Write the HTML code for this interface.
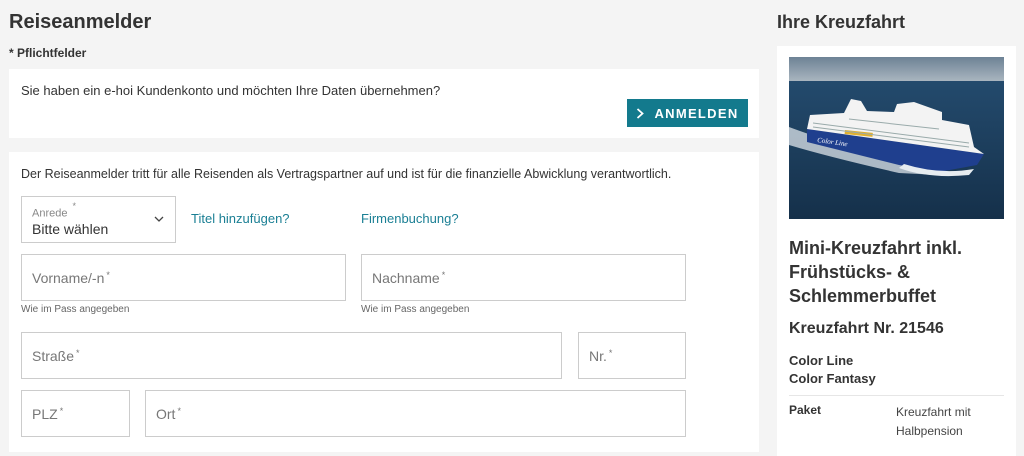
<!DOCTYPE html>
<html><head><meta charset="utf-8"><style>
*{box-sizing:border-box;margin:0;padding:0}
body{width:1024px;height:446px;overflow:hidden;background:#f4f4f4;font-family:"Liberation Sans",Arial,sans-serif;color:#333;position:relative}
.a{position:absolute}
.panel{position:absolute;background:#fff}
.f{position:absolute;border:1px solid #ccc;background:#fff;font-size:14px;color:#777;padding-left:10px;display:flex;align-items:center}
.f sup{font-size:9px;margin-left:2px;position:relative;top:-3px}
.hint{position:absolute;font-size:10px;color:#666}
a{color:#1a7f94;text-decoration:none;font-size:13px}
</style></head><body>
<div class="a" style="left:9px;top:11px;font-size:20px;font-weight:bold;color:#333">Reiseanmelder</div>
<div class="a" style="left:9px;top:46px;font-size:12px;font-weight:bold">* Pflichtfelder</div>
<div class="panel" style="left:9px;top:69px;width:750px;height:69px"></div>
<div class="a" style="left:21px;top:83px;font-size:13px">Sie haben ein e-hoi Kundenkonto und möchten Ihre Daten übernehmen?</div>
<div class="a" style="left:627px;top:99px;width:121px;height:28px;background:#137a8d;color:#fff;font-size:13px;font-weight:bold;letter-spacing:1.3px;display:flex;align-items:center;justify-content:center"><svg width="8" height="11" style="margin-right:10px"><path d="M1.5 1l5 4.5-5 4.5" fill="none" stroke="#fff" stroke-width="1.8"/></svg>ANMELDEN</div>
<div class="panel" style="left:9px;top:152px;width:750px;height:300px"></div>
<div class="a" style="left:21px;top:167px;font-size:12.5px">Der Reiseanmelder tritt für alle Reisenden als Vertragspartner auf und ist für die finanzielle Abwicklung verantwortlich.</div>
<div class="f" style="left:21px;top:196px;width:155px;height:47px;display:block;padding-top:7px">
<div style="font-size:11px;color:#888">Anrede <sup>*</sup></div>
<div style="font-size:14px;color:#333;margin-top:1px">Bitte wählen</div>
<svg class="a" style="left:132px;top:19px" width="10" height="7"><path d="M1 1l4 4 4-4" fill="none" stroke="#444" stroke-width="1.3"/></svg>
</div>
<a class="a" style="left:191px;top:211px">Titel hinzufügen?</a>
<a class="a" style="left:361px;top:211px">Firmenbuchung?</a>
<div class="f" style="left:21px;top:254px;width:325px;height:47px">Vorname/-n<sup>*</sup></div>
<div class="hint" style="left:21px;top:304px">Wie im Pass angegeben</div>
<div class="f" style="left:361px;top:254px;width:325px;height:47px">Nachname<sup>*</sup></div>
<div class="hint" style="left:361px;top:304px">Wie im Pass angegeben</div>
<div class="f" style="left:21px;top:332px;width:541px;height:47px">Straße<sup>*</sup></div>
<div class="f" style="left:578px;top:332px;width:108px;height:47px">Nr.<sup>*</sup></div>
<div class="f" style="left:21px;top:390px;width:109px;height:47px">PLZ<sup>*</sup></div>
<div class="f" style="left:145px;top:390px;width:541px;height:47px">Ort<sup>*</sup></div>

<div class="a" style="left:777px;top:12px;font-size:18px;font-weight:bold">Ihre Kreuzfahrt</div>
<div class="panel" style="left:777px;top:46px;width:239px;height:410px"></div>
<svg class="a" style="left:789px;top:57px" width="215" height="162" viewBox="0 0 215 162">
<defs><linearGradient id="s" x1="0" y1="0" x2="0" y2="1"><stop offset="0" stop-color="#264f73"/><stop offset="1" stop-color="#15304a"/></linearGradient>
<linearGradient id="k" x1="0" y1="0" x2="0" y2="1"><stop offset="0" stop-color="#6d8295"/><stop offset="1" stop-color="#a9b5bf"/></linearGradient></defs>
<rect width="215" height="162" fill="url(#s)"/>
<rect width="215" height="24" fill="url(#k)"/>
<path d="M0 70 Q40 85 120 108 L150 118 L110 116 Q40 100 0 88Z" fill="#dde4ea" opacity=".75"/>
<path d="M18 72 L195 97 L188 108 L150 115 L110 108 L18 85Z" fill="#1f3f8e"/>
<path d="M21 58 L55 56 L62 42 L72 44 L78 54 L105 55 L108 47 L125 45 L153 55 L153 63 L180 68 L185 90 L195 97 L18 72Z" fill="#f3f3f3"/>
<rect x="56" y="73" width="28" height="4" fill="#e0b030" transform="rotate(6 56 73)"/>
<g stroke="#9aa" stroke-width="1"><path d="M24 66 L180 86"/><path d="M24 70 L180 90"/><path d="M60 62 L150 72"/></g>
<path d="M115 107 Q150 118 185 112 L180 118 Q140 122 110 111Z" fill="#e6ecf0"/>
<text x="28" y="85" font-size="7" fill="#fff" font-family="Liberation Serif" font-style="italic" transform="rotate(8 28 85)">Color Line</text>
</svg>
<div class="a" style="left:789px;top:236px;font-size:18px;font-weight:bold;line-height:24px;width:220px">Mini-Kreuzfahrt inkl. Frühstücks- &amp; Schlemmerbuffet</div>
<div class="a" style="left:789px;top:320px;font-size:16px;font-weight:bold">Kreuzfahrt Nr. 21546</div>
<div class="a" style="left:789px;top:352px;font-size:13px;font-weight:bold;line-height:18px">Color Line<br>Color Fantasy</div>
<div class="a" style="left:789px;top:395px;width:215px;border-top:1px solid #e6e6e6"></div>
<div class="a" style="left:789px;top:403px;font-size:12px;font-weight:bold">Paket</div>
<div class="a" style="left:896px;top:403px;font-size:12px;line-height:19px;color:#444">Kreuzfahrt mit<br>Halbpension</div>
</body></html>
